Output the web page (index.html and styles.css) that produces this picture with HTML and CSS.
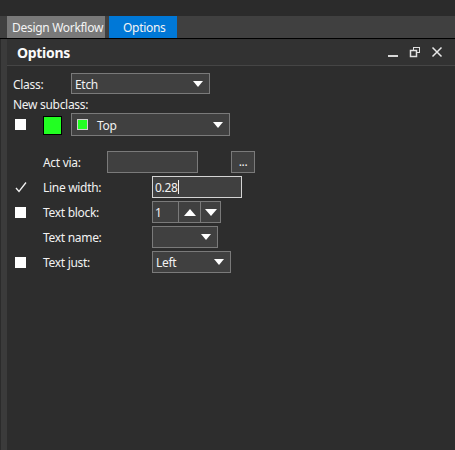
FILE: index.html
```html
<!DOCTYPE html>
<html>
<head>
<meta charset="utf-8">
<link rel="stylesheet" href="styles.css">
</head>
<body>
<div class="topbar"></div>
<div class="tabbar">
  <div class="tab tab-gray">Design Workflow</div>
  <div class="tab tab-blue">Options</div>
</div>
<div class="main">
  <div class="strip"></div>
  <div class="panel">
    <div class="header">
      <div class="title">Options</div>
      <div class="wincontrols">
        <svg class="wic" width="12" height="12" viewBox="0 0 12 12"><rect x="1" y="9" width="10" height="2" fill="#d8d8d8"/></svg>
        <svg class="wic" width="12" height="12" viewBox="0 0 12 12"><rect x="4.5" y="1.5" width="6" height="5" fill="none" stroke="#e0e0e0" stroke-width="1"/><rect x="1.5" y="4.5" width="6" height="6" fill="#333" stroke="#e0e0e0" stroke-width="1.5"/></svg>
        <svg class="wic" width="12" height="12" viewBox="0 0 12 12"><path d="M1.5 1.5 L10.5 10.5 M10.5 1.5 L1.5 10.5" stroke="#e8e8e8" stroke-width="1.5"/></svg>
      </div>
    </div>
    <div class="content">
      <div class="row r-class">
        <div class="lbl w-class">Class:</div>
        <div class="combo w-etch"><span class="ctext">Etch</span><span class="arrow"></span></div>
      </div>
      <div class="row r-sub">
        <div class="lbl">New subclass:</div>
      </div>
      <div class="row r-subrow">
        <div class="chk"><span class="box"></span></div>
        <div class="swatchcell"><span class="swatch"></span></div>
        <div class="combo w-top"><span class="mini"></span><span class="ctext">Top</span><span class="arrow"></span></div>
      </div>
      <div class="row r-act">
        <div class="chk"></div>
        <div class="lbl w-act">Act via:</div>
        <div class="field w-actbox"></div>
        <div class="dots">...</div>
      </div>
      <div class="row r-std">
        <div class="chk"><svg width="12" height="11" viewBox="0 0 12 11"><path d="M1 6 L4 9.5 L11 0.5" fill="none" stroke="#f2f2f2" stroke-width="1.3"/></svg></div>
        <div class="lbl w-lbl">Line width:</div>
        <div class="field field-active w-lw"><span class="ctext">0.28</span><span class="caret"></span></div>
      </div>
      <div class="row r-std">
        <div class="chk"><span class="box"></span></div>
        <div class="lbl w-lbl">Text block:</div>
        <div class="spin">
          <div class="spin-val">1</div>
          <div class="spin-btn"><span class="up"></span></div>
          <div class="spin-btn last"><span class="down"></span></div>
        </div>
      </div>
      <div class="row r-std">
        <div class="chk"></div>
        <div class="lbl w-lbl">Text name:</div>
        <div class="combo w-tn"><span class="ctext"></span><span class="arrow"></span></div>
      </div>
      <div class="row r-std">
        <div class="chk"><span class="box"></span></div>
        <div class="lbl w-lbl">Text just:</div>
        <div class="combo w-tj"><span class="ctext">Left</span><span class="arrow"></span></div>
      </div>
    </div>
  </div>
</div>
</body>
</html>
```
FILE: styles.css
```css
* { box-sizing: border-box; }
html, body { margin: 0; padding: 0; }
body {
  width: 455px;
  height: 450px;
  overflow: hidden;
  background: #2b2b2b;
  font-family: "Segoe UI", "Noto Sans", "Open Sans", sans-serif;
  font-size: 12px;
  letter-spacing: -0.3px;
  color: #f2f2f2;
}
.topbar { height: 16px; background: #2b2b2b; }
.tabbar {
  height: 23px;
  background: #404040;
  border-bottom: 1px solid #000;
  display: flex;
  padding-left: 7px;
  gap: 4px;
}
.tab {
  height: 22px;
  line-height: 23px;
  padding: 0 5px;
  color: #f4f4f4;
  white-space: nowrap;
}
.tab-gray { background: #797979; width: 98px; padding-left: 5px; }
.tab-blue { background: #0078d7; width: 68px; padding-left: 14px; }
.main { display: flex; height: 411px; }
.strip {
  width: 7px;
  background: #3b3b3b;
  border-left: 1px solid #2b2b2b;
}
.panel { flex: 1; background: #2d2d2d; display: flex; flex-direction: column; }
.header {
  height: 27px;
  background: #323232;
  border-bottom: 1px solid #454545;
  display: flex;
  align-items: center;
  padding-left: 10px;
}
.title { font-weight: bold; font-size: 14px; color: #fafafa; flex: 1; }
.wincontrols { display: flex; gap: 10px; padding-right: 12px; align-items: center; }
.wic { display: block; }
.content { padding: 7px 0 0 6px; }
.row { display: flex; align-items: center; }
.r-class { height: 21px; }
.r-sub { height: 19px; }
.r-subrow { height: 23px; }
.r-act { height: 22px; margin-top: 15px; }
.r-std { height: 22px; margin-top: 3px; }
.lbl { white-space: nowrap; padding-top: 1px; }
.w-class { width: 58px; }
.w-act { width: 64px; }
.w-lbl { width: 109px; }
.chk { width: 30px; display: flex; align-items: center; padding-left: 2px; }
.box { display: block; width: 11px; height: 11px; background: #ffffff; }
.swatchcell { width: 28px; }
.swatch {
  display: block; width: 19px; height: 19px;
  background: #22ff22; border: 1px solid #000;
  margin-top: 1px;
}
.combo, .field, .dots, .spin {
  background: #404040;
  border: 1px solid #7a7a7a;
  height: 100%;
  display: flex;
  align-items: center;
}
.combo { padding-left: 3px; position: relative; }
.ctext { flex: 1; padding-top: 1px; }
.arrow {
  width: 0; height: 0;
  border-left: 5px solid transparent;
  border-right: 5px solid transparent;
  border-top: 6px solid #ffffff;
  margin-right: 6px;
}
.w-etch { width: 139px; }
.w-top { width: 159px; padding-left: 5px; }
.mini {
  width: 11px; height: 11px;
  background: #22ff22; border: 1px solid #d0d0d0;
  margin-right: 9px;
}
.w-tn { width: 66px; }
.w-tj { width: 79px; }
.field { padding-left: 2px; }
.w-actbox { width: 91px; }
.dots {
  width: 24px; margin-left: 33px;
  justify-content: center; align-items: flex-end; padding-bottom: 4px;
  line-height: 12px;
}
.field-active { border-color: #d4d4d4; }
.w-lw { width: 90px; }
.field-active .ctext { flex: 0 0 auto; }
.caret { width: 1px; height: 14px; background: #f0f0f0; }
.field-active::after { content: ""; flex: 1; }
.spin { width: 69px; }
.spin-val { width: 26px; padding-left: 2px; height: 100%; display: flex; align-items: center; border-right: 1px solid #7a7a7a; }
.spin-btn { width: 22px; height: 100%; display: flex; align-items: center; justify-content: center; border-right: 1px solid #7a7a7a; }
.spin-btn.last { border-right: none; width: 19px; }
.up {
  width: 0; height: 0;
  border-left: 6px solid transparent; border-right: 6px solid transparent;
  border-bottom: 7px solid #fff;
}
.down {
  width: 0; height: 0;
  border-left: 6px solid transparent; border-right: 6px solid transparent;
  border-top: 7px solid #fff;
}
```
